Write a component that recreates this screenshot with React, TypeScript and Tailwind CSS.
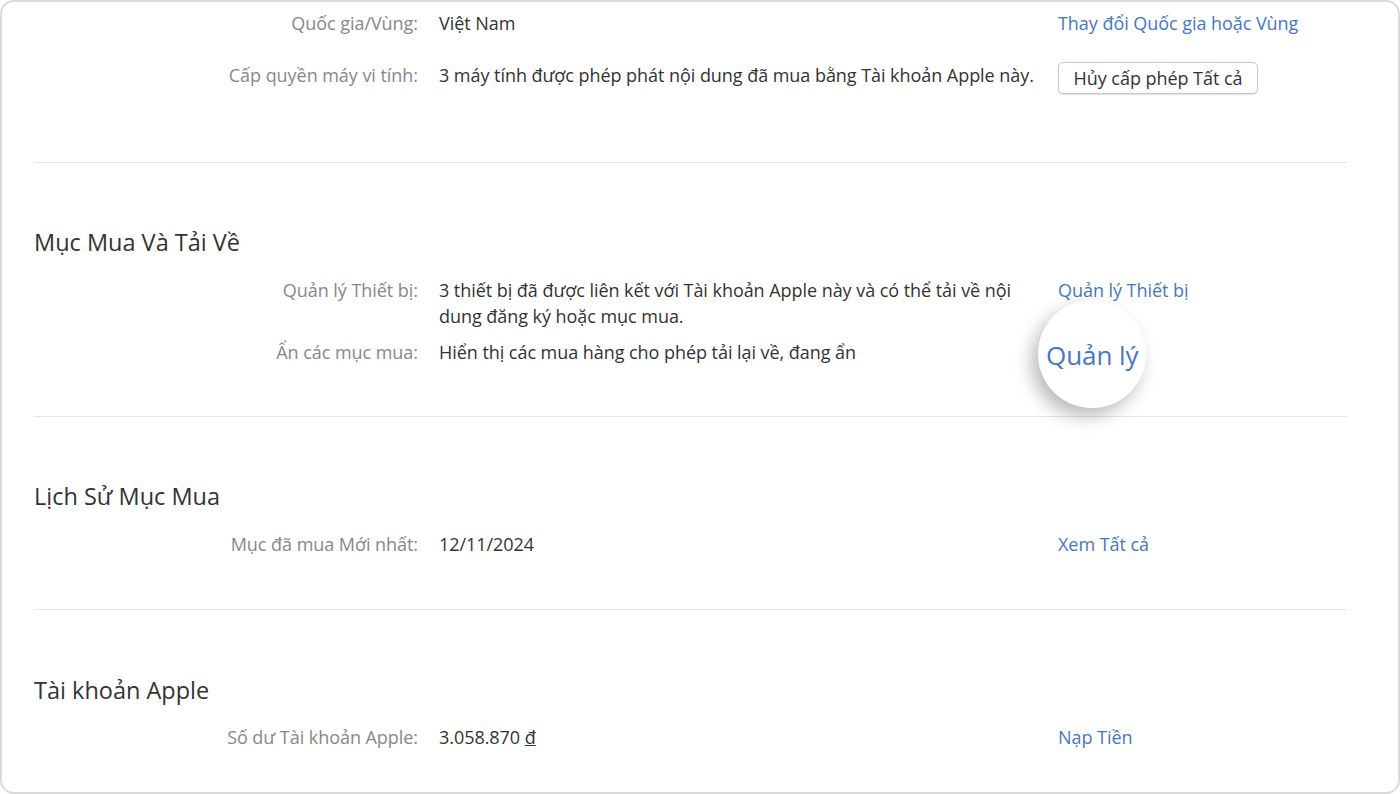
import React from "react";

const font = { fontFamily: '"Open Sans", "Noto Sans", sans-serif' };

function Row({
  label,
  children,
  action,
  className = "",
}: {
  label: string;
  children: React.ReactNode;
  action?: React.ReactNode;
  className?: string;
}) {
  return (
    <div className={"flex items-start text-[18px] leading-[26px] tracking-[-0.05px] " + className}>
      <div className="w-[384px] shrink-0 text-right text-[#888888]">{label}</div>
      <div className="ml-[21px] w-[600px] shrink-0 text-[#333333]">{children}</div>
      <div className="ml-[19px] relative">{action}</div>
    </div>
  );
}

function Link({ children }: { children: React.ReactNode }) {
  return <span className="text-[#4677c6]">{children}</span>;
}

function Divider() {
  return <div className="h-px bg-[#e6e6e6]" />;
}

function Heading({ children }: { children: React.ReactNode }) {
  return <div className="text-[23.5px] leading-[32px] text-[#333333]">{children}</div>;
}

export default function App() {
  return (
    <div className="w-[1400px] h-[794px] bg-white" style={font}>
      <div className="w-[1400px] h-[794px] border-2 border-[#dadada] rounded-[14px] pl-[32px] pr-[51px] pt-[8px] overflow-hidden">
        <Row label="Quốc gia/Vùng:" action={<Link>Thay đổi Quốc gia hoặc Vùng</Link>}>
          Việt Nam
        </Row>
        <Row
          className="mt-[26px]"
          label="Cấp quyền máy vi tính:"
          action={
            <button className="h-[32px] px-[14px] border border-[#c8c8c8] rounded-[5px] bg-white text-[#333333] text-[18px] leading-[26px] shadow-[0_1px_1px_rgba(0,0,0,0.12)] w-[200px]">
              Hủy cấp phép Tất cả
            </button>
          }
        >
          3 máy tính được phép phát nội dung đã mua bằng Tài khoản Apple này.
        </Row>
        <div className="mt-[68px]">
          <Divider />
        </div>

        <div className="pt-[63px]">
          <Heading>Mục Mua Và Tải Về</Heading>
          <Row className="mt-[19px]" label="Quản lý Thiết bị:" action={<Link>Quản lý Thiết bị</Link>}>
            3 thiết bị đã được liên kết với Tài khoản Apple này và có thể tải về nội dung đăng ký hoặc mục mua.
          </Row>
          <Row
            className="mt-[10px]"
            label="Ẩn các mục mua:"
            action={
              <div className="relative w-[60px] h-[26px]">
                <div className="absolute left-[-20px] top-[-39px] w-[108px] h-[108px] rounded-full bg-white shadow-[-6px_8px_18px_rgba(0,0,0,0.28)] flex items-center">
                  <span className="ml-[8px] mt-[2px] text-[26px] leading-[36px] text-[#4677c6]">Quản lý</span>
                </div>
              </div>
            }
          >
            Hiển thị các mua hàng cho phép tải lại về, đang ẩn
          </Row>
          <div className="mt-[51px]">
            <Divider />
          </div>
        </div>

        <div className="pt-[63px]">
          <Heading>Lịch Sử Mục Mua</Heading>
          <Row className="mt-[19px]" label="Mục đã mua Mới nhất:" action={<Link>Xem Tất cả</Link>}>
            12/11/2024
          </Row>
          <div className="mt-[52px]">
            <Divider />
          </div>
        </div>

        <div className="pt-[64px]">
          <Heading>Tài khoản Apple</Heading>
          <Row className="mt-[18px]" label="Số dư Tài khoản Apple:" action={<Link>Nạp Tiền</Link>}>
            3.058.870 <span className="underline">đ</span>
          </Row>
        </div>
      </div>
    </div>
  );
}
